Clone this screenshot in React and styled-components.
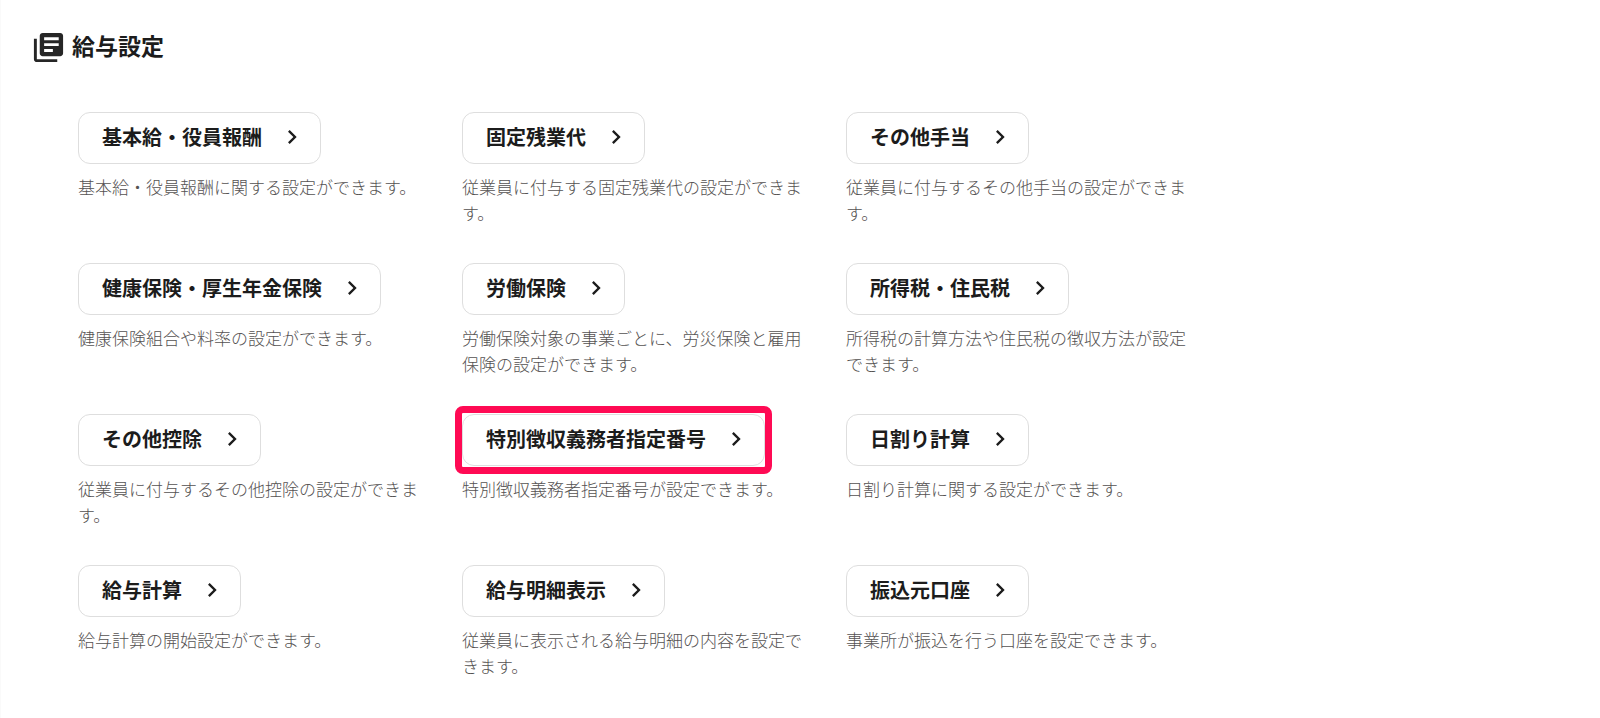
import React from "react";
import styled, { createGlobalStyle, css } from "styled-components";
import { MdLibraryBooks, MdChevronRight } from "react-icons/md";

const GlobalStyle = createGlobalStyle`
  *, *::before, *::after { box-sizing: border-box; }
  body {
    margin: 0;
    background: #ffffff;
    color: #1c1c1c;
    font-family: "Noto Sans CJK JP", "Noto Sans", sans-serif;
  }
`;

const Page = styled.main`
  min-height: 100vh;
  padding: 28px 32px 36px 30px;
  border-left: 1px solid #fafafa;
`;

const SectionHeader = styled.header`
  display: flex;
  align-items: center;
  gap: 6px;
  height: 38px;
`;

const SectionIcon = styled(MdLibraryBooks)`
  width: 35px;
  height: 35px;
  flex: none;
  color: #262626;
`;

const SectionTitle = styled.h1`
  margin: 0;
  padding-bottom: 4px;
  font-size: 23px;
  line-height: 34px;
  font-weight: 700;
`;

const SettingsGrid = styled.ul`
  list-style: none;
  margin: 46px 0 0;
  padding: 0 0 0 47px;
  display: grid;
  grid-template-columns: repeat(auto-fill, 350px);
  gap: 36px 34px;
  max-width: 1200px;
`;

const SettingItem = styled.li`
  display: flex;
  flex-direction: column;
  align-items: flex-start;
  gap: 10px;
  min-height: 115px;
`;

const highlightFrame = css`
  &::after {
    content: "";
    position: absolute;
    inset: -9px -8px;
    border: 7px solid #ff0a54;
    border-radius: 8px;
    pointer-events: none;
  }
`;

const SettingButton = styled.button`
  position: relative;
  display: inline-flex;
  align-items: center;
  gap: 16px;
  height: 52px;
  padding: 0 14px 2px 23px;
  border: 1px solid #dedede;
  border-radius: 12px;
  background: #ffffff;
  color: inherit;
  font: inherit;
  font-size: 20px;
  line-height: 28px;
  font-weight: 700;
  white-space: nowrap;
  cursor: pointer;
  ${(p) => p.$highlighted && highlightFrame}
`;

const Chevron = styled(MdChevronRight)`
  width: 28px;
  height: 28px;
  flex: none;
`;

const Description = styled.p`
  margin: 0;
  color: #555252;
  font-size: 17px;
  line-height: 26px;
  font-weight: 300;
`;

const settings = [
  { label: "基本給・役員報酬", text: "基本給・役員報酬に関する設定ができます。" },
  { label: "固定残業代", text: "従業員に付与する固定残業代の設定ができます。" },
  { label: "その他手当", text: "従業員に付与するその他手当の設定ができます。" },
  { label: "健康保険・厚生年金保険", text: "健康保険組合や料率の設定ができます。" },
  { label: "労働保険", text: "労働保険対象の事業ごとに、労災保険と雇用保険の設定ができます。" },
  { label: "所得税・住民税", text: "所得税の計算方法や住民税の徴収方法が設定できます。" },
  { label: "その他控除", text: "従業員に付与するその他控除の設定ができます。" },
  { label: "特別徴収義務者指定番号", text: "特別徴収義務者指定番号が設定できます。", highlighted: true },
  { label: "日割り計算", text: "日割り計算に関する設定ができます。" },
  { label: "給与計算", text: "給与計算の開始設定ができます。" },
  { label: "給与明細表示", text: "従業員に表示される給与明細の内容を設定できます。" },
  { label: "振込元口座", text: "事業所が振込を行う口座を設定できます。" },
];

export default function App() {
  return (
    <>
      <GlobalStyle />
      <Page lang="ja">
        <SectionHeader>
          <SectionIcon aria-hidden="true" />
          <SectionTitle>給与設定</SectionTitle>
        </SectionHeader>
        <SettingsGrid>
          {settings.map((s) => (
            <SettingItem key={s.label}>
              <SettingButton type="button" $highlighted={s.highlighted}>
                {s.label}
                <Chevron aria-hidden="true" />
              </SettingButton>
              <Description>{s.text}</Description>
            </SettingItem>
          ))}
        </SettingsGrid>
      </Page>
    </>
  );
}
